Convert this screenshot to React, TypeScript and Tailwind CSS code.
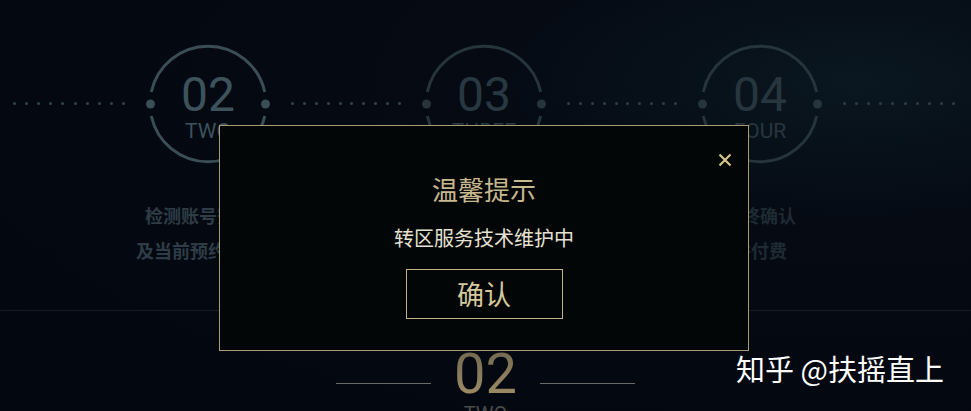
import React from 'react';

const cjk = { fontFamily: '"Noto Sans CJK SC", "Noto Sans", sans-serif' };
const num = { fontFamily: 'Roboto, "Noto Sans", sans-serif' };

const Dots: React.FC<{ width: string; color: string }> = ({ width, color }) => (
  <div className={`flex justify-between mt-[60px] ${width}`}>
    {Array.from({ length: 10 }).map((_, i) => (
      <span key={i} className={`block w-[3px] h-[3px] rounded-full ${color}`} />
    ))}
  </div>
);

interface StepProps {
  no: string;
  word: string;
  lines: [string, string];
  stroke: string;
  numColor: string;
  labelColor: string;
}

const Step: React.FC<StepProps> = ({ no, word, lines, stroke, numColor, labelColor }) => (
  <div className="flex flex-col items-center w-[124px] shrink-0">
    <div className="relative w-[124px] h-[124px] flex flex-col items-center justify-center">
      <svg className="absolute inset-0" width="124" height="124" viewBox="0 0 124 124" fill="none">
        {/* top arc and bottom arc, leaving gaps for the side dots */}
        <path d="M 5.3 50 A 58 58 0 0 1 118.7 50" stroke={stroke} strokeWidth="3" />
        <path d="M 5.3 74 A 58 58 0 0 0 118.7 74" stroke={stroke} strokeWidth="3" />
        <circle cx="4.5" cy="62" r="4.5" fill={stroke} />
        <circle cx="119.5" cy="62" r="4.5" fill={stroke} />
      </svg>
      <div className={`text-[48px] leading-none mt-[4px] ${numColor}`} style={num}>
        {no}
      </div>
      <div className={`text-[21px] leading-none mt-[2px] ${numColor}`} style={num}>
        {word}
      </div>
    </div>
    <div className={`mt-[32px] flex flex-col items-center text-[18px] font-bold leading-[35px] whitespace-nowrap ${labelColor}`} style={cjk}>
      <span>{lines[0]}</span>
      <span>{lines[1]}</span>
    </div>
  </div>
);

export default function App() {
  return (
    <div className="relative w-[971px] h-[411px] overflow-hidden bg-[radial-gradient(ellipse_at_88%_20%,#0a1720_0%,#050a13_30%,#03070f_100%)]">
      <section className="h-[310px] pt-[42px] pl-[13px]">
        <div className="flex items-start gap-[21px]">
          <Dots width="w-[112px]" color="bg-[#34444c]" />
          <Step
            no="02"
            word="TWO"
            lines={['检测账号安全性', '及当前预约的状态']}
            stroke="#3a4e56"
            numColor="text-[#3d525a]"
            labelColor="text-[#2d3c45]"
          />
          <Dots width="w-[110px]" color="bg-[#34444c]" />
          <Step
            no="03"
            word="THREE"
            lines={['选择目标大区', '及角色信息']}
            stroke="#26343b"
            numColor="text-[#283840]"
            labelColor="text-[#222f37]"
          />
          <Dots width="w-[110px]" color="bg-[#2f3e46]" />
          <Step
            no="04"
            word="FOUR"
            lines={['最终确认', '并付费']}
            stroke="#26343b"
            numColor="text-[#27363e]"
            labelColor="text-[#1e2a31]"
          />
          <Dots width="w-[112px]" color="bg-[#2f3e46]" />
        </div>
      </section>

      <div className="h-px bg-[#141c26]" />

      <section className="flex flex-col items-center pt-[35px]">
        <div className="flex items-start gap-[23px]">
          <div className="w-[95px] h-px mt-[37px] bg-[#6a6a66]" />
          <div className="text-[56px] leading-none font-normal bg-gradient-to-b from-[#6f6650] to-[#a39167] bg-clip-text text-transparent" style={num}>
            02
          </div>
          <div className="w-[95px] h-px mt-[37px] bg-[#6a6a66]" />
        </div>
        <div className="text-[20px] leading-none mt-[2px] text-[#4a4a4a]" style={num}>
          TWO
        </div>
      </section>

      {/* dialog */}
      <div className="absolute left-[219px] top-[125px] w-[530px] h-[226px] bg-[#020606] border border-[#a99b73] flex flex-col items-center pt-[47px]" style={cjk}>
        <button className="absolute top-[27px] right-[16px] w-[14px] h-[14px]">
          <svg width="14" height="14" viewBox="0 0 14 14" fill="none">
            <path d="M1.5 1.5 L12.5 12.5 M12.5 1.5 L1.5 12.5" stroke="#d6c590" strokeWidth="2.2" />
          </svg>
        </button>
        <div className="text-[26px] leading-[32px] text-[#c8b88e]">温馨提示</div>
        <div className="mt-[19px] text-[20px] leading-[28px] text-[#e6e1d3]">转区服务技术维护中</div>
        <button className="mt-[17px] w-[157px] h-[50px] border border-[#c2b283] flex items-center justify-center text-[27px] text-[#d6c79c]" style={cjk}>
          确认
        </button>
      </div>

      {/* watermark */}
      <div className="absolute left-[736px] top-[348px] text-[29px] leading-[40px] text-white whitespace-nowrap" style={cjk}>
        知乎 @扶摇直上
      </div>
    </div>
  );
}
